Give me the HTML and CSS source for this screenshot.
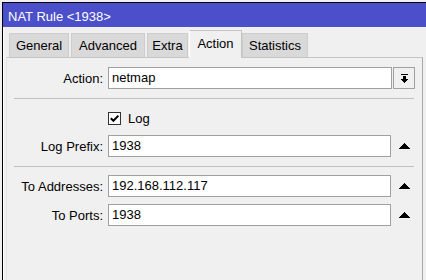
FILE: index.html
```html
<!DOCTYPE html>
<html lang="en">
<head>
  <meta charset="UTF-8" />
  <title>NAT Rule &lt;1938&gt;</title>
  <link rel="stylesheet" href="styles.css">
</head>
<body>
  <div class="window">
    <div class="titlebar">NAT Rule &lt;1938&gt;</div>

    <div class="window-body">
      <div class="tabs">
        <div class="tab tab-general">General</div>
        <div class="tab tab-advanced">Advanced</div>
        <div class="tab tab-extra">Extra</div>
        <div class="tab tab-action selected">Action</div>
        <div class="tab tab-stats">Statistics</div>
      </div>

      <div class="panel">
        <div class="row">
          <label class="label">Action:</label>
          <div class="field">netmap</div>
          <button class="drop-btn">
            <!-- bar over a down arrow -->
            <svg width="7" height="9" viewBox="0 0 7 9" shape-rendering="crispEdges">
              <rect x="0" y="0" width="7" height="1" fill="#000" />
              <rect x="2" y="2" width="3" height="3" fill="#000" />
              <polygon points="0,5 7,5 3.5,8.6" fill="#000" />
            </svg>
          </button>
        </div>

        <div class="sep"></div>

        <div class="row row-check">
          <span class="label"></span>
          <label class="check">
            <span class="box">
              <svg width="11" height="11" viewBox="0 0 11 11">
                <path d="M1.8 5.2 L4.4 7.8 L9.4 2.6" fill="none" stroke="#000" stroke-width="2" />
              </svg>
            </span>
            Log
          </label>
        </div>

        <div class="row">
          <label class="label">Log Prefix:</label>
          <div class="field short">1938</div>
          <span class="arrow">
            <svg width="12" height="6" viewBox="0 0 12 6" shape-rendering="crispEdges">
              <polygon points="0,6 12,6 6,0" fill="#000" />
            </svg>
          </span>
        </div>

        <div class="sep"></div>

        <div class="row">
          <label class="label">To Addresses:</label>
          <div class="field short">192.168.112.117</div>
          <span class="arrow">
            <svg width="12" height="6" viewBox="0 0 12 6" shape-rendering="crispEdges">
              <polygon points="0,6 12,6 6,0" fill="#000" />
            </svg>
          </span>
        </div>

        <div class="row">
          <label class="label">To Ports:</label>
          <div class="field short">1938</div>
          <span class="arrow">
            <svg width="12" height="6" viewBox="0 0 12 6" shape-rendering="crispEdges">
              <polygon points="0,6 12,6 6,0" fill="#000" />
            </svg>
          </span>
        </div>
      </div>
    </div>
  </div>
</body>
</html>
```

FILE: styles.css
```css
body {
  margin: 0;
  background-color: #f0f0f0;
  font-family: "Liberation Sans", Arial, sans-serif;
  font-size: 13px;
  color: #000;
  overflow: hidden;
  height: 280px;
}
.window {
  margin: 2px 0 0 2px;
  width: 424px;
  height: 278px;
  box-sizing: border-box;
  border-top: 1px solid #000;
  border-left: 1px solid #000;
  background-color: #f0f0f0;
}
.titlebar {
  height: 24px;
  box-sizing: border-box;
  padding: 3px 0 0 5px;
  line-height: 22px;
  background-color: #4b4fc9;
  color: #fff;
}
.window-body {
  border-left: 1px solid #fff;
  padding-left: 2px;
  height: 254px;
}
.tabs {
  display: flex;
  align-items: flex-end;
  gap: 2px;
  height: 30px;
  padding-left: 3px;
}
.tab {
  height: 24px;
  box-sizing: border-box;
  padding-top: 1px;
  line-height: 22px;
  text-align: center;
  background-color: #d9d9d9;
  border: 1px solid #cdcdcd;
  border-bottom: none;
}
.tab-general { width: 60px; }
.tab-advanced { width: 74px; }
.tab-extra { width: 41px; }
.tab-action { width: 53px; }
.tab-stats { width: 66px; }
.tab.selected {
  position: relative;
  z-index: 1;
  height: 28px;
  margin: 0 -2px -1px -1px;
  padding: 2px 0 3px 0;
  background-color: #f0f0f0;
  border-color: #c4c4c4;
  border-left-color: #fff;
}
.panel {
  width: 417px;
  height: 230px;
  box-sizing: border-box;
  border: 1px solid #c4c4c4;
  border-left-color: #e4e4e4;
  border-right-color: #a8a8a8;
  padding: 9px 0 0 7px;
}
.row {
  display: flex;
  align-items: center;
  height: 22px;
}
.row + .row {
  margin-top: 7px;
}
.row-check {
  margin-top: 1px;
}
.row-check + .row {
  margin-top: 6px;
}
.label {
  width: 89px;
  margin-right: 5px;
  text-align: right;
  white-space: nowrap;
}
.field {
  width: 284px;
  height: 22px;
  box-sizing: border-box;
  border: 1px solid #a0a0a0;
  background-color: #fff;
  padding-left: 3px;
  line-height: 20px;
}
.field.short {
  width: 283px;
}
.drop-btn {
  width: 22px;
  height: 22px;
  margin-left: 1px;
  padding: 0;
  box-sizing: border-box;
  border: 1px solid #a0a0a0;
  background-color: #f0f0f0;
  display: flex;
  justify-content: center;
  align-items: center;
}
.arrow {
  display: flex;
  margin-left: 7px;
}
.sep {
  width: 400px;
  height: 1px;
  background-color: #c0c0c0;
  margin: 9px 0 8px 0;
}
.check {
  display: flex;
  align-items: center;
}
.box {
  width: 13px;
  height: 13px;
  box-sizing: border-box;
  border: 1px solid #333;
  background-color: #fff;
  margin-right: 7px;
  display: flex;
}
```
